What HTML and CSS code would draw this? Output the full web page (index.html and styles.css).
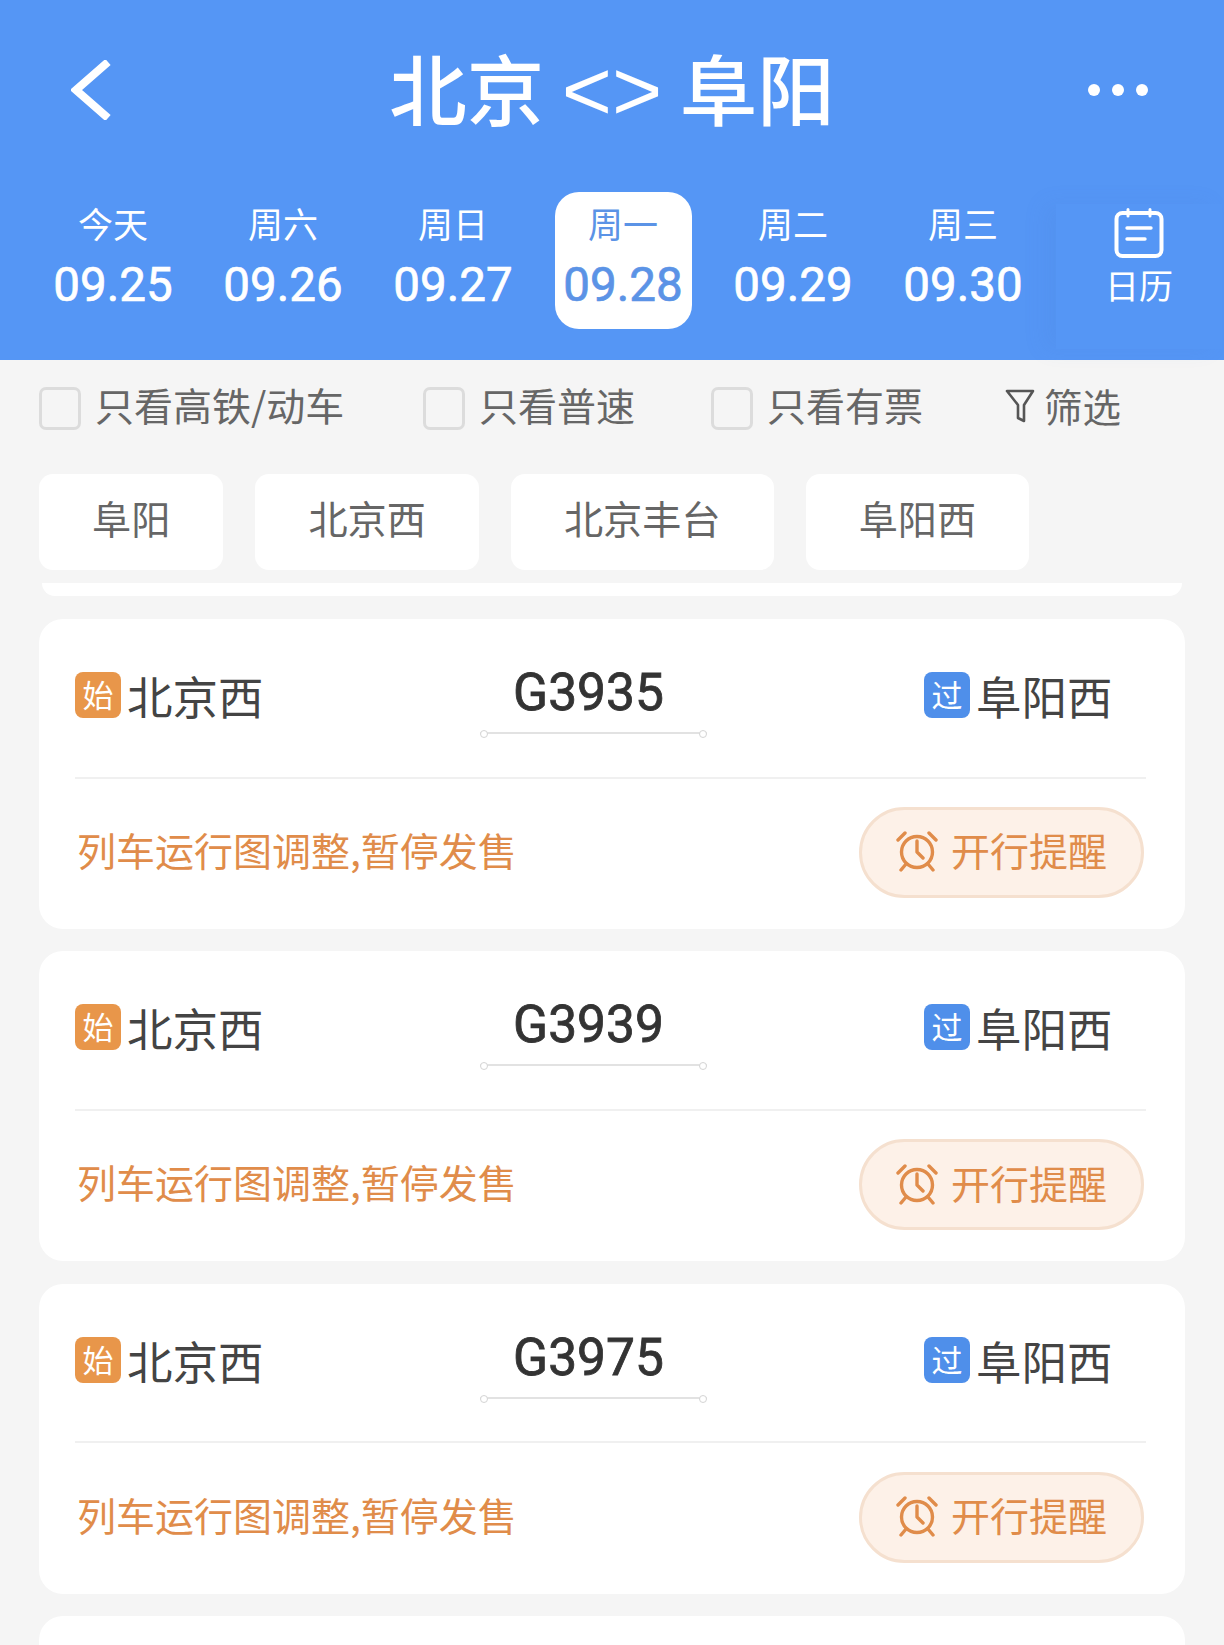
FILE: index.html
```html
<!DOCTYPE html>
<html lang="zh-CN">
<head>
<meta charset="UTF-8">
<meta name="viewport" content="width=device-width, initial-scale=1.0">
<title>北京 &lt;&gt; 阜阳</title>
<link rel="stylesheet" href="styles.css">
</head>
<body>

<div class="page">
    <!-- 顶部导航和日期 -->
    <header class="header">
        <div class="topbar">
            <svg class="back" width="40" height="60" viewBox="0 0 40 60"><path d="M37 2 L5 30 L37 58" fill="none" stroke="#fff" stroke-width="8"/></svg>
            <h1 class="title">北京 <span class="title-sep">&lt;&gt;</span> 阜阳</h1>
            <svg class="more" width="60" height="14" viewBox="0 0 60 14"><circle cx="6" cy="7" r="6" fill="#fff"/><circle cx="30" cy="7" r="6" fill="#fff"/><circle cx="54" cy="7" r="6" fill="#fff"/></svg>
        </div>
        <div class="dates">
            <div class="date"><span class="day">今天</span><span class="num">09.25</span></div>
            <div class="date"><span class="day">周六</span><span class="num">09.26</span></div>
            <div class="date"><span class="day">周日</span><span class="num">09.27</span></div>
            <div class="date date-active"><span class="day">周一</span><span class="num">09.28</span></div>
            <div class="date"><span class="day">周二</span><span class="num">09.29</span></div>
            <div class="date"><span class="day">周三</span><span class="num">09.30</span></div>
            <div class="calendar">
                <svg width="50" height="50" viewBox="0 0 50 50" fill="none" stroke="#fff" stroke-linecap="round">
                    <rect x="2.5" y="5" width="45" height="43" rx="6" stroke-width="4"/>
                    <path d="M14 1.5 V8 M36 1.5 V8" stroke-width="3"/>
                    <path d="M13 20 H37 M13 31 H31" stroke-width="3.4"/>
                </svg>
                <span class="calendar-label">日历</span>
            </div>
        </div>
    </header>

    <!-- 筛选 -->
    <div class="filters">
        <label class="check check-first"><span class="box"></span>只看高铁/动车</label>
        <label class="check check-second"><span class="box"></span>只看普速</label>
        <label class="check check-third"><span class="box"></span>只看有票</label>
        <div class="filter-btn">
            <svg width="30" height="34" viewBox="0 0 30 34" fill="none" stroke="#555" stroke-width="2.6" stroke-linejoin="round" stroke-linecap="round"><path d="M2 2 H28 L19 16 V32 L13 29 V16 Z"/></svg>
            筛选
        </div>
    </div>

    <div class="chips">
        <div class="chip">阜阳</div>
        <div class="chip">北京西</div>
        <div class="chip">北京丰台</div>
        <div class="chip">阜阳西</div>
    </div>

    <!-- 车次列表 -->
    <div class="list">
        <div class="card-tail"></div>

        <div class="card">
            <div class="card-top">
                <div class="station"><span class="badge badge-start">始</span>北京西</div>
                <div class="train">
                    <span class="train-no">G3935</span>
                    <span class="train-line"></span>
                </div>
                <div class="station station-end"><span class="badge badge-pass">过</span>阜阳西</div>
            </div>
            <div class="card-bottom">
                <span class="notice">列车运行图调整,暂停发售</span>
                <div class="remind">
                    <svg class="remind-icon" width="42" height="42" viewBox="0 0 42 42" fill="none" stroke="#e08c4a" stroke-width="3.4" stroke-linecap="round" stroke-linejoin="round"><circle cx="21" cy="22" r="15.5"/><path d="M21 11 V22 L27 28 M2 10 L9 3 M40 10 L33 3 M10 34 L5 40 M32 34 L37 40"/></svg>
                    开行提醒
                </div>
            </div>
        </div>

        <div class="card">
            <div class="card-top">
                <div class="station"><span class="badge badge-start">始</span>北京西</div>
                <div class="train">
                    <span class="train-no">G3939</span>
                    <span class="train-line"></span>
                </div>
                <div class="station station-end"><span class="badge badge-pass">过</span>阜阳西</div>
            </div>
            <div class="card-bottom">
                <span class="notice">列车运行图调整,暂停发售</span>
                <div class="remind">
                    <svg class="remind-icon" width="42" height="42" viewBox="0 0 42 42" fill="none" stroke="#e08c4a" stroke-width="3.4" stroke-linecap="round" stroke-linejoin="round"><circle cx="21" cy="22" r="15.5"/><path d="M21 11 V22 L27 28 M2 10 L9 3 M40 10 L33 3 M10 34 L5 40 M32 34 L37 40"/></svg>
                    开行提醒
                </div>
            </div>
        </div>

        <div class="card">
            <div class="card-top">
                <div class="station"><span class="badge badge-start">始</span>北京西</div>
                <div class="train">
                    <span class="train-no">G3975</span>
                    <span class="train-line"></span>
                </div>
                <div class="station station-end"><span class="badge badge-pass">过</span>阜阳西</div>
            </div>
            <div class="card-bottom">
                <span class="notice">列车运行图调整,暂停发售</span>
                <div class="remind">
                    <svg class="remind-icon" width="42" height="42" viewBox="0 0 42 42" fill="none" stroke="#e08c4a" stroke-width="3.4" stroke-linecap="round" stroke-linejoin="round"><circle cx="21" cy="22" r="15.5"/><path d="M21 11 V22 L27 28 M2 10 L9 3 M40 10 L33 3 M10 34 L5 40 M32 34 L37 40"/></svg>
                    开行提醒
                </div>
            </div>
        </div>

        <div class="card"></div>
    </div>
</div>

</body>
</html>
```

FILE: styles.css
```css
* {
    box-sizing: border-box;
}

body {
    margin: 0;
    font-family: "Noto Sans CJK SC", Roboto, sans-serif;
    background-color: #f5f5f5;
}

.page {
    height: 1645px;
    overflow: hidden;
}

.header {
    height: 360px;
    background-color: #5596f5;
    color: #fff;
}

.topbar {
    height: 192px;
    padding: 0 76px 12px 71px;
    display: flex;
    align-items: center;
    justify-content: space-between;
}

.title {
    margin: 0 0 4px 25px;
    font-size: 77.5px;
    font-weight: 500;
    line-height: 90px;
}

.title-sep {
    font-family: "Liberation Sans", sans-serif;
    font-weight: 400;
    font-size: 86px;
}

.dates {
    display: flex;
    padding-left: 28px;
}

.date {
    width: 137px;
    height: 137px;
    margin: 0 16.5px;
    display: flex;
    flex-direction: column;
    align-items: center;
    padding-top: 8px;
    border-radius: 24px;
}

.date-active {
    background-color: #fff;
    color: #5b93e6;
}

.day {
    font-size: 35px;
    line-height: 46px;
}

.num {
    font-family: Roboto, sans-serif;
    font-size: 47.5px;
    -webkit-text-stroke: 0.7px currentColor;
    line-height: 58px;
    margin-top: 10px;
}

.calendar {
    width: 166px;
    height: 145px;
    margin: 12px 0 0 8px;
    padding-top: 4px;
    display: flex;
    flex-direction: column;
    align-items: center;
    box-shadow: -12px 0 20px rgba(70, 120, 210, 0.1);
}

.calendar-label {
    font-size: 34px;
    line-height: 46px;
    margin-top: 4px;
}

.filters {
    height: 114px;
    padding: 27px 0 0 39px;
    display: flex;
    align-items: flex-start;
    color: #666;
    font-size: 39px;
}

.check {
    display: flex;
    align-items: flex-start;
    height: 43px;
    line-height: 35px;
}

.check-first {
    width: 384px;
}

.check-second {
    width: 288px;
}

.check-third {
    width: 294px;
}

.box {
    width: 42px;
    height: 43px;
    margin-right: 14px;
    border: 3px solid #dcdcdc;
    border-radius: 7px;
}

.filter-btn {
    display: flex;
    align-items: center;
    gap: 9px;
    height: 43px;
    font-size: 38.5px;
    line-height: 43px;
    margin-top: -3px;
}

.chips {
    display: flex;
    gap: 32px;
    padding-left: 39px;
}

.chip {
    height: 96px;
    padding: 0 53px;
    line-height: 86px;
    font-size: 39.2px;
    color: #666;
    background-color: #fff;
    border-radius: 14px;
}

.list {
    padding: 0 39px;
}

.card-tail {
    height: 13px;
    margin: 13px 3px 0;
    background-color: #fff;
    border-radius: 0 0 24px 24px;
}

.card {
    height: 310px;
    margin-top: 22.4px;
    padding: 0 39px 0 36px;
    background-color: #fff;
    border-radius: 24px;
}

.card-tail + .card {
    margin-top: 23px;
}

.card-top {
    height: 159.5px;
    display: grid;
    grid-template-columns: 405px 227px 1fr;
    border-bottom: 2px solid #f0f0f0;
}

.station {
    display: flex;
    align-items: flex-start;
    padding-top: 53px;
    font-size: 45.5px;
    line-height: 46px;
    color: #444;
}

.station-end {
    padding-left: 217px;
    white-space: nowrap;
}

.badge {
    flex: none;
    width: 46px;
    height: 46px;
    margin-right: 6px;
    border-radius: 8px;
    color: #fff;
    font-size: 31px;
    line-height: 43px;
    text-align: center;
}

.badge-start {
    background-color: #e8964a;
}

.badge-pass {
    background-color: #4f8fea;
}

.train {
    display: flex;
    flex-direction: column;
    align-items: center;
    padding-top: 44px;
}

.train-no {
    font-family: Roboto, sans-serif;
    font-size: 51.5px;
    -webkit-text-stroke: 0.8px currentColor;
    line-height: 60px;
    color: #333;
    margin-right: 10px;
}

.train-line {
    position: relative;
    width: 100%;
    height: 2px;
    margin-top: 9px;
    background-color: #e2e2e2;
}

.train-line::before,
.train-line::after {
    content: "";
    position: absolute;
    top: -2px;
    width: 6px;
    height: 6px;
    background-color: #fff;
    border: 1.5px solid #d4d4d4;
    border-radius: 50%;
}

.train-line::before {
    left: 0;
}

.train-line::after {
    right: 0;
}

.card-bottom {
    height: 148.5px;
    display: flex;
    align-items: center;
    justify-content: space-between;
    padding: 0 2px;
}

.notice {
    font-size: 39px;
    color: #e08c4a;
    margin-top: -8px;
}

.remind {
    width: 285px;
    height: 91px;
    margin-top: -1px;
    padding-bottom: 6px;
    display: flex;
    align-items: center;
    justify-content: center;
    gap: 13px;
    background-color: #fdf1e8;
    border: 3px solid #f5e0cf;
    border-radius: 46px;
    color: #e08c4a;
    font-size: 39px;
}

.remind-icon {
    margin-top: 4px;
}
```
